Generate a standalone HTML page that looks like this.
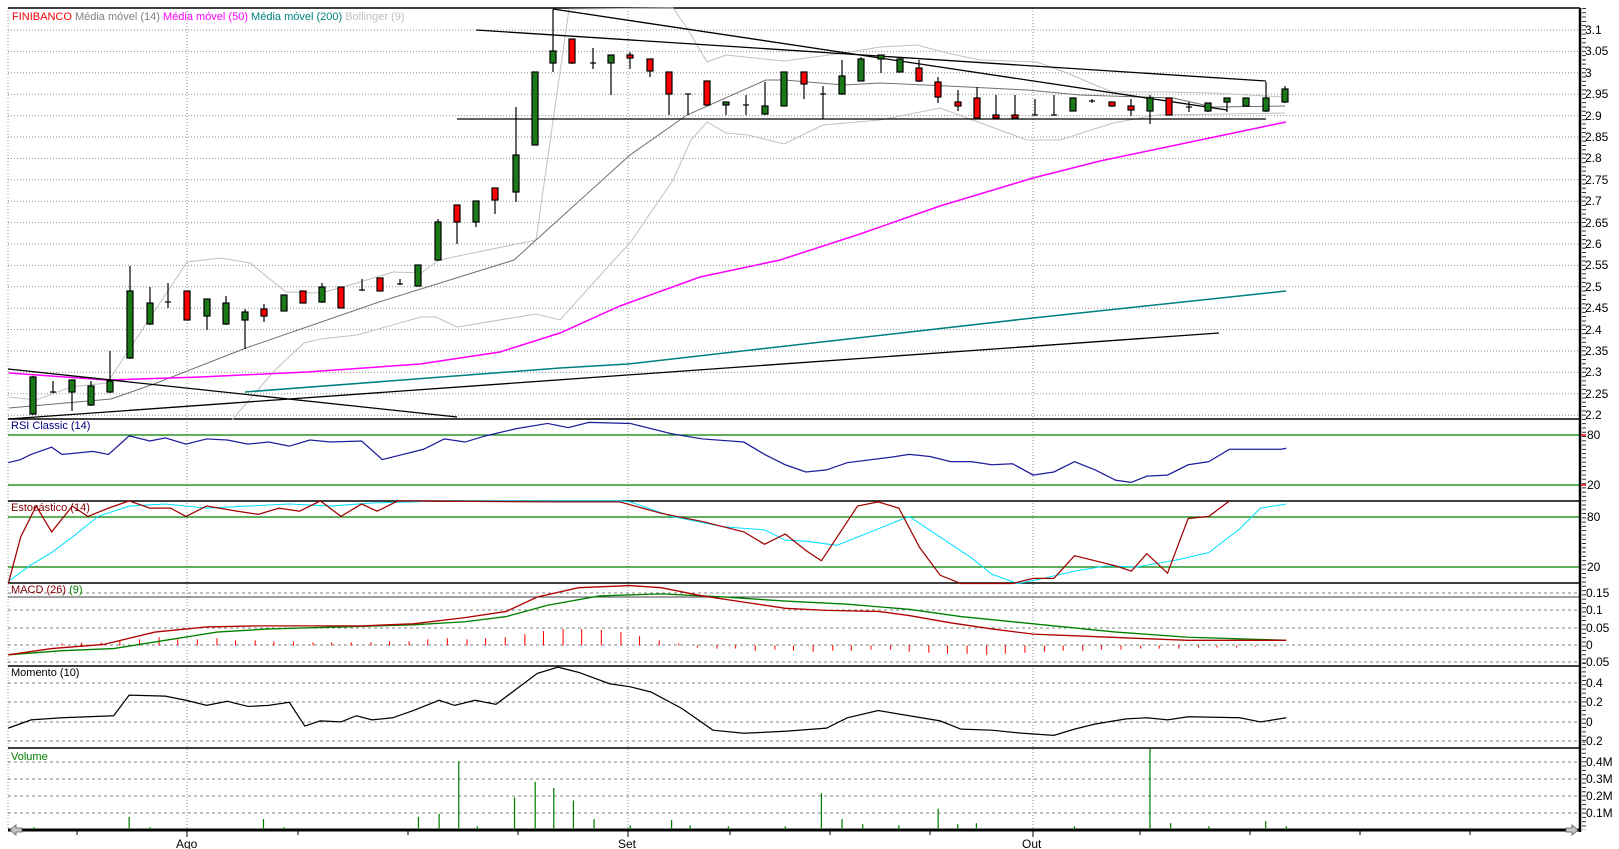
<!DOCTYPE html>
<html><head><meta charset="utf-8"><style>
html,body{margin:0;padding:0;background:#fff;width:1619px;height:849px;overflow:hidden}
svg{display:block;font-family:"Liberation Sans",Arial,sans-serif}
</style></head><body>
<svg width="1619" height="849" viewBox="0 0 1619 849" xmlns="http://www.w3.org/2000/svg">
<rect width="1619" height="849" fill="#fff"/>
<!-- price grid -->
<g stroke="#909090" stroke-width="1" stroke-dasharray="1,2">
<line x1="8" y1="30" x2="1580" y2="30"/><line x1="8" y1="51.4" x2="1580" y2="51.4"/><line x1="8" y1="72.8" x2="1580" y2="72.8"/><line x1="8" y1="94.2" x2="1580" y2="94.2"/><line x1="8" y1="115.6" x2="1580" y2="115.6"/><line x1="8" y1="137" x2="1580" y2="137"/><line x1="8" y1="158.4" x2="1580" y2="158.4"/><line x1="8" y1="179.8" x2="1580" y2="179.8"/><line x1="8" y1="201.2" x2="1580" y2="201.2"/><line x1="8" y1="222.6" x2="1580" y2="222.6"/><line x1="8" y1="244" x2="1580" y2="244"/><line x1="8" y1="265.4" x2="1580" y2="265.4"/><line x1="8" y1="286.8" x2="1580" y2="286.8"/><line x1="8" y1="308.2" x2="1580" y2="308.2"/><line x1="8" y1="329.6" x2="1580" y2="329.6"/><line x1="8" y1="351" x2="1580" y2="351"/><line x1="8" y1="372.4" x2="1580" y2="372.4"/><line x1="8" y1="393.8" x2="1580" y2="393.8"/><line x1="8" y1="415.2" x2="1580" y2="415.2"/>
<line x1="8" y1="8" x2="8" y2="830"/><line x1="187" y1="8" x2="187" y2="830"/><line x1="628" y1="8" x2="628" y2="830"/><line x1="1033" y1="8" x2="1033" y2="830"/>
</g>
<!-- lower dashed grids -->
<g stroke="#808080" stroke-width="1" stroke-dasharray="3,3">
<line x1="8" y1="593" x2="1580" y2="593"/><line x1="8" y1="610" x2="1580" y2="610"/><line x1="8" y1="628" x2="1580" y2="628"/><line x1="8" y1="645" x2="1580" y2="645"/><line x1="8" y1="662" x2="1580" y2="662"/>
<line x1="8" y1="683" x2="1580" y2="683"/><line x1="8" y1="702" x2="1580" y2="702"/><line x1="8" y1="722" x2="1580" y2="722"/><line x1="8" y1="741" x2="1580" y2="741"/>
<line x1="8" y1="762" x2="1580" y2="762"/><line x1="8" y1="779" x2="1580" y2="779"/><line x1="8" y1="796" x2="1580" y2="796"/><line x1="8" y1="813" x2="1580" y2="813"/>
</g>
<line x1="8" y1="597" x2="1580" y2="597" stroke="#404040" stroke-width="1"/>
<g stroke="#008000" stroke-width="1.2">
<line x1="8" y1="435" x2="1580" y2="435"/><line x1="8" y1="485" x2="1580" y2="485"/><line x1="8" y1="517" x2="1580" y2="517"/><line x1="8" y1="567" x2="1580" y2="567"/>
</g>
<!-- separators -->
<g stroke="#000" stroke-width="1.5">
<line x1="8" y1="8" x2="1580" y2="8"/><line x1="8" y1="419" x2="1580" y2="419"/><line x1="8" y1="501" x2="1580" y2="501"/><line x1="8" y1="583" x2="1580" y2="583"/><line x1="8" y1="666" x2="1580" y2="666"/><line x1="8" y1="748" x2="1580" y2="748"/>
</g>
<line x1="1580" y1="8" x2="1580" y2="832" stroke="#000" stroke-width="2.5"/>
<line x1="1584" y1="8" x2="1584" y2="830" stroke="#000" stroke-width="4" stroke-dasharray="1,3.28" opacity="0.8"/>
<line x1="8" y1="830" x2="1580" y2="830" stroke="#000" stroke-width="3"/>
<!-- bottom ticks -->
<g stroke="#000" stroke-width="1"><line x1="77" y1="830" x2="77" y2="835"/><line x1="187" y1="830" x2="187" y2="837"/><line x1="298" y1="830" x2="298" y2="835"/><line x1="408" y1="830" x2="408" y2="835"/><line x1="518" y1="830" x2="518" y2="835"/><line x1="628" y1="830" x2="628" y2="837"/><line x1="730" y1="830" x2="730" y2="835"/><line x1="830" y1="830" x2="830" y2="835"/><line x1="930" y1="830" x2="930" y2="835"/><line x1="1033" y1="830" x2="1033" y2="837"/><line x1="1140" y1="830" x2="1140" y2="835"/><line x1="1250" y1="830" x2="1250" y2="835"/><line x1="1360" y1="830" x2="1360" y2="835"/><line x1="1470" y1="830" x2="1470" y2="835"/></g>
<polygon points="10,830 16,825 16,828 22,828 22,832 16,832 16,835" fill="#c8c8c8" stroke="#555" stroke-width="0.8"/>
<polygon points="1578,830 1572,825 1572,828 1566,828 1566,832 1572,832 1572,835" fill="#c8c8c8" stroke="#555" stroke-width="0.8"/>

<!-- Bollinger / MA lines -->
<polyline fill="none" stroke="#c0c0c0" stroke-width="1" points="9,397 36,400 71,387 107,383 187,262 221,258 250,263 286,292 321,293 357,283 393,272 421,273 439,260 536,240 569,9 673,8 687,28 707,62 726,55 784,61 844,53 880,47 917,45 947,53 980,60 1037,62 1067,73 1100,87 1113,92 1163,92 1213,93 1285,97"/>
<polyline fill="none" stroke="#c0c0c0" stroke-width="1" points="232,420 275,370 304,343 321,339 357,335 421,317 436,317 457,327 536,314 560,320 614,260 630,243 673,180 691,140 707,122 726,133 748,135 784,144 823,125 880,120 940,108 1027,140 1060,140 1113,123 1157,115 1285,113"/>
<polyline fill="none" stroke="#707070" stroke-width="1" points="9,408 111,399 154,384 246,348 379,302 514,260 536,240 630,155 687,115 766,80 784,80 844,85 880,83 947,86 1027,90 1080,95 1173,98 1213,107 1285,106"/>
<polyline fill="none" stroke="#ff00ff" stroke-width="1.5" points="9,373 107,380 200,377 307,372 420,364 500,352 560,333 620,306 700,277 780,260 860,234 940,206 1033,178 1100,161 1200,140 1286,122"/>
<polyline fill="none" stroke="#008080" stroke-width="1.5" points="245,392 560,368 628,364 1033,318 1286,291"/>
<!-- trend lines -->
<g stroke="#000" stroke-width="1.3" fill="none">
<line x1="457" y1="119" x2="1266" y2="119"/>
<line x1="476" y1="30" x2="1266" y2="81"/>
<line x1="553" y1="9" x2="1227" y2="110"/>
<line x1="8" y1="419" x2="1219" y2="333"/>
<line x1="8" y1="369" x2="457" y2="417"/>
</g>
<!-- candles -->
<g stroke="#000" stroke-width="1.2">
<line x1="33" y1="376" x2="33" y2="415"/><rect x="30" y="377" width="6" height="37" fill="#1a7a1a"/>
<line x1="53" y1="381" x2="53" y2="393"/><line x1="50" y1="392" x2="56" y2="392"/>
<line x1="72" y1="380" x2="72" y2="411"/><rect x="69" y="380" width="6" height="12" fill="#1a7a1a"/>
<line x1="91" y1="381" x2="91" y2="406"/><rect x="88" y="386" width="6" height="19" fill="#1a7a1a"/>
<line x1="110" y1="351" x2="110" y2="393"/><rect x="107" y="381" width="6" height="11" fill="#1a7a1a"/>
<line x1="130" y1="266" x2="130" y2="359"/><rect x="127" y="291" width="6" height="67" fill="#1a7a1a"/>
<line x1="150" y1="287" x2="150" y2="325"/><rect x="147" y="303" width="6" height="21" fill="#1a7a1a"/>
<line x1="168" y1="283" x2="168" y2="308"/><line x1="165" y1="302" x2="171" y2="302"/>
<line x1="187" y1="291" x2="187" y2="320"/><rect x="184" y="291" width="6" height="29" fill="#ff0000"/>
<line x1="207" y1="299" x2="207" y2="330"/><rect x="204" y="299" width="6" height="17" fill="#1a7a1a"/>
<line x1="226" y1="296" x2="226" y2="325"/><rect x="223" y="303" width="6" height="21" fill="#1a7a1a"/>
<line x1="245" y1="309" x2="245" y2="349"/><rect x="242" y="312" width="6" height="8" fill="#1a7a1a"/>
<line x1="264" y1="304" x2="264" y2="322"/><rect x="261" y="309" width="6" height="7" fill="#ff0000"/>
<line x1="284" y1="295" x2="284" y2="311"/><rect x="281" y="295" width="6" height="16" fill="#1a7a1a"/>
<line x1="303" y1="291" x2="303" y2="303"/><rect x="300" y="291" width="6" height="12" fill="#ff0000"/>
<line x1="322" y1="283" x2="322" y2="303"/><rect x="319" y="287" width="6" height="15" fill="#1a7a1a"/>
<line x1="341" y1="287" x2="341" y2="308"/><rect x="338" y="287" width="6" height="21" fill="#ff0000"/>
<line x1="362" y1="279" x2="362" y2="291"/><line x1="359" y1="290" x2="365" y2="290"/>
<line x1="380" y1="278" x2="380" y2="291"/><rect x="377" y="278" width="6" height="13" fill="#ff0000"/>
<line x1="400" y1="279" x2="400" y2="285"/><line x1="397" y1="284" x2="403" y2="284"/>
<line x1="418" y1="265" x2="418" y2="286"/><rect x="415" y="265" width="6" height="21" fill="#1a7a1a"/>
<line x1="438" y1="219" x2="438" y2="261"/><rect x="435" y="222" width="6" height="38" fill="#1a7a1a"/>
<line x1="457" y1="205" x2="457" y2="244"/><rect x="454" y="205" width="6" height="17" fill="#ff0000"/>
<line x1="476" y1="201" x2="476" y2="227"/><rect x="473" y="201" width="6" height="21" fill="#1a7a1a"/>
<line x1="495" y1="188" x2="495" y2="214"/><rect x="492" y="188" width="6" height="12" fill="#ff0000"/>
<line x1="516" y1="107" x2="516" y2="202"/><rect x="513" y="155" width="6" height="37" fill="#1a7a1a"/>
<line x1="535" y1="72" x2="535" y2="145"/><rect x="532" y="72" width="6" height="73" fill="#1a7a1a"/>
<line x1="553" y1="9" x2="553" y2="72"/><rect x="550" y="51" width="6" height="12" fill="#1a7a1a"/>
<line x1="572" y1="39" x2="572" y2="64"/><rect x="569" y="39" width="6" height="24" fill="#ff0000"/>
<line x1="593" y1="48" x2="593" y2="69"/><line x1="590" y1="63" x2="596" y2="63"/>
<line x1="611" y1="55" x2="611" y2="95"/><rect x="608" y="55" width="6" height="8" fill="#1a7a1a"/>
<line x1="630" y1="52" x2="630" y2="69"/><rect x="627" y="55" width="6" height="3" fill="#ff0000"/>
<line x1="650" y1="59" x2="650" y2="77"/><rect x="647" y="59" width="6" height="12" fill="#ff0000"/>
<line x1="669" y1="72" x2="669" y2="115"/><rect x="666" y="72" width="6" height="22" fill="#ff0000"/>
<line x1="688" y1="94" x2="688" y2="115"/><line x1="685" y1="94" x2="691" y2="94"/>
<line x1="707" y1="81" x2="707" y2="106"/><rect x="704" y="81" width="6" height="24" fill="#ff0000"/>
<line x1="726" y1="102" x2="726" y2="115"/><rect x="723" y="102" width="6" height="3" fill="#1a7a1a"/>
<line x1="746" y1="95" x2="746" y2="115"/><line x1="743" y1="105" x2="749" y2="105"/>
<line x1="765" y1="82" x2="765" y2="115"/><rect x="762" y="106" width="6" height="8" fill="#1a7a1a"/>
<line x1="784" y1="72" x2="784" y2="106"/><rect x="781" y="72" width="6" height="34" fill="#1a7a1a"/>
<line x1="804" y1="72" x2="804" y2="99"/><rect x="801" y="72" width="6" height="12" fill="#ff0000"/>
<line x1="823" y1="86" x2="823" y2="119"/><line x1="820" y1="94" x2="826" y2="94"/>
<line x1="842" y1="60" x2="842" y2="95"/><rect x="839" y="76" width="6" height="18" fill="#1a7a1a"/>
<line x1="861" y1="57" x2="861" y2="81"/><rect x="858" y="59" width="6" height="22" fill="#1a7a1a"/>
<line x1="881" y1="55" x2="881" y2="73"/><rect x="878" y="55" width="6" height="4" fill="#1a7a1a"/>
<line x1="900" y1="57" x2="900" y2="72"/><rect x="897" y="59" width="6" height="13" fill="#1a7a1a"/>
<line x1="919" y1="60" x2="919" y2="82"/><rect x="916" y="68" width="6" height="13" fill="#ff0000"/>
<line x1="938" y1="77" x2="938" y2="103"/><rect x="935" y="82" width="6" height="15" fill="#ff0000"/>
<line x1="958" y1="90" x2="958" y2="111"/><rect x="955" y="102" width="6" height="4" fill="#ff0000"/>
<line x1="977" y1="87" x2="977" y2="119"/><rect x="974" y="98" width="6" height="20" fill="#ff0000"/>
<line x1="996" y1="95" x2="996" y2="119"/><rect x="993" y="115" width="6" height="3" fill="#ff0000"/>
<line x1="1015" y1="95" x2="1015" y2="119"/><rect x="1012" y="115" width="6" height="3" fill="#ff0000"/>
<line x1="1035" y1="99" x2="1035" y2="115"/><line x1="1032" y1="115" x2="1038" y2="115"/>
<line x1="1054" y1="95" x2="1054" y2="115"/><line x1="1051" y1="115" x2="1057" y2="115"/>
<line x1="1073" y1="98" x2="1073" y2="111"/><rect x="1070" y="98" width="6" height="13" fill="#1a7a1a"/>
<line x1="1092" y1="99" x2="1092" y2="103"/><line x1="1089" y1="101" x2="1095" y2="101"/>
<line x1="1112" y1="102" x2="1112" y2="107"/><rect x="1109" y="102" width="6" height="4" fill="#ff0000"/>
<line x1="1131" y1="99" x2="1131" y2="116"/><rect x="1128" y="106" width="6" height="4" fill="#ff0000"/>
<line x1="1150" y1="95" x2="1150" y2="124"/><rect x="1147" y="98" width="6" height="13" fill="#1a7a1a"/>
<line x1="1169" y1="98" x2="1169" y2="115"/><rect x="1166" y="98" width="6" height="17" fill="#ff0000"/>
<line x1="1189" y1="102" x2="1189" y2="112"/><line x1="1186" y1="107" x2="1192" y2="107"/>
<line x1="1208" y1="103" x2="1208" y2="112"/><rect x="1205" y="103" width="6" height="8" fill="#1a7a1a"/>
<line x1="1227" y1="98" x2="1227" y2="112"/><rect x="1224" y="98" width="6" height="4" fill="#1a7a1a"/>
<line x1="1246" y1="98" x2="1246" y2="106"/><rect x="1243" y="98" width="6" height="8" fill="#1a7a1a"/>
<line x1="1266" y1="82" x2="1266" y2="112"/><rect x="1263" y="98" width="6" height="13" fill="#1a7a1a"/>
<line x1="1285" y1="86" x2="1285" y2="103"/><rect x="1282" y="89" width="6" height="13" fill="#1a7a1a"/>
</g>

<!-- lower indicators in view coords -->
<g transform="scale(1.0332,1.0328)" fill="none">
<polyline stroke="#1c1c9c" stroke-width="1.2" points="8,448 20,445 30,440 50,433 60,440 90,437 105,440 125,422 145,427 160,424 180,430 200,425 220,426 240,430 260,428 280,432 300,426 320,428 350,427 370,445 390,440 410,435 430,425 450,428 470,422 500,415 530,410 550,414 570,409 610,410 650,420 680,425 720,428 740,440 760,450 780,457 800,455 820,448 860,443 880,440 900,442 920,447 940,447 960,450 980,449 1000,460 1020,457 1040,447 1060,455 1080,465 1095,467 1110,461 1130,460 1150,450 1170,447 1190,435 1240,435 1245,434"/>
<polyline stroke="#00e0ff" stroke-width="1" points="8,563 30,547 50,535 70,520 95,500 125,490 160,488 200,492 240,490 280,488 320,490 360,487 400,486 420,485 600,485 610,486 650,500 700,510 740,513 760,523 780,524 810,528 850,512 880,500 910,520 940,540 960,556 985,565 1010,560 1040,553 1070,548 1100,549 1140,542 1170,535 1200,512 1220,492 1245,488"/>
<polyline stroke="#a00000" stroke-width="1.2" points="8,565 20,520 35,490 50,515 70,490 85,500 105,492 125,485 145,492 165,492 180,500 200,490 230,495 250,498 270,492 290,495 310,485 330,500 350,488 365,495 385,485 540,486 600,486 640,497 680,505 720,515 740,527 760,517 780,533 795,543 830,490 850,486 870,492 890,530 910,557 930,565 980,565 1000,560 1020,560 1040,538 1060,543 1080,548 1095,553 1110,536 1130,555 1150,502 1170,500 1190,485"/>
<g stroke="#ff0000" stroke-width="1">
<line x1="60" y1="625" x2="60" y2="623"/><line x1="79" y1="625" x2="79" y2="622"/><line x1="98" y1="625" x2="98" y2="622"/><line x1="116" y1="625" x2="116" y2="620"/><line x1="135" y1="625" x2="135" y2="619"/><line x1="154" y1="625" x2="154" y2="617"/><line x1="172" y1="625" x2="172" y2="619"/><line x1="191" y1="625" x2="191" y2="619"/><line x1="210" y1="625" x2="210" y2="618"/><line x1="228" y1="625" x2="228" y2="620"/><line x1="247" y1="625" x2="247" y2="620"/><line x1="265" y1="625" x2="265" y2="621"/><line x1="284" y1="625" x2="284" y2="621"/><line x1="303" y1="625" x2="303" y2="622"/><line x1="321" y1="625" x2="321" y2="622"/><line x1="340" y1="625" x2="340" y2="622"/><line x1="359" y1="625" x2="359" y2="622"/><line x1="377" y1="625" x2="377" y2="621"/><line x1="396" y1="625" x2="396" y2="621"/><line x1="414" y1="625" x2="414" y2="619"/><line x1="433" y1="625" x2="433" y2="618"/><line x1="452" y1="625" x2="452" y2="619"/><line x1="470" y1="625" x2="470" y2="618"/><line x1="489" y1="625" x2="489" y2="617"/><line x1="508" y1="625" x2="508" y2="614"/><line x1="526" y1="625" x2="526" y2="611"/><line x1="545" y1="625" x2="545" y2="609"/><line x1="563" y1="625" x2="563" y2="609"/><line x1="582" y1="625" x2="582" y2="610"/><line x1="601" y1="625" x2="601" y2="612"/><line x1="619" y1="625" x2="619" y2="616"/><line x1="638" y1="625" x2="638" y2="620"/><line x1="657" y1="625" x2="657" y2="623"/><line x1="675" y1="625" x2="675" y2="627"/><line x1="694" y1="625" x2="694" y2="628"/><line x1="712" y1="625" x2="712" y2="628"/><line x1="731" y1="625" x2="731" y2="630"/><line x1="750" y1="625" x2="750" y2="629"/><line x1="768" y1="625" x2="768" y2="630"/><line x1="787" y1="625" x2="787" y2="631"/><line x1="806" y1="625" x2="806" y2="630"/><line x1="824" y1="625" x2="824" y2="630"/><line x1="843" y1="625" x2="843" y2="629"/><line x1="862" y1="625" x2="862" y2="629"/><line x1="880" y1="625" x2="880" y2="631"/><line x1="899" y1="625" x2="899" y2="632"/><line x1="917" y1="625" x2="917" y2="633"/><line x1="936" y1="625" x2="936" y2="633"/><line x1="955" y1="625" x2="955" y2="634"/><line x1="973" y1="625" x2="973" y2="633"/><line x1="992" y1="625" x2="992" y2="632"/><line x1="1011" y1="625" x2="1011" y2="631"/><line x1="1029" y1="625" x2="1029" y2="630"/><line x1="1048" y1="625" x2="1048" y2="630"/><line x1="1066" y1="625" x2="1066" y2="629"/><line x1="1085" y1="625" x2="1085" y2="629"/><line x1="1104" y1="625" x2="1104" y2="628"/><line x1="1122" y1="625" x2="1122" y2="628"/><line x1="1141" y1="625" x2="1141" y2="628"/><line x1="1160" y1="625" x2="1160" y2="627"/><line x1="1178" y1="625" x2="1178" y2="627"/><line x1="1197" y1="625" x2="1197" y2="627"/><line x1="1215" y1="625" x2="1215" y2="626"/><line x1="1234" y1="625" x2="1234" y2="626"/>
</g>
<polyline stroke="#008000" stroke-width="1.3" points="8,634 60,630 110,628 160,620 210,612 260,609 330,607 400,605 450,602 490,597 530,586 580,577 640,575 700,578 760,582 820,585 880,590 930,597 1000,604 1080,612 1150,617 1245,620"/>
<polyline stroke="#b00000" stroke-width="1.3" points="8,634 50,628 100,624 150,612 200,607 250,606 300,606 350,606 400,604 450,598 490,592 520,578 560,569 610,567 640,569 680,577 720,583 760,589 800,591 850,592 880,596 920,603 960,609 1000,614 1050,616 1100,618 1150,620 1245,620"/>
<polyline stroke="#000" stroke-width="1.2" points="8,705 30,697 60,695 110,693 125,673 160,674 180,678 200,683 220,679 240,684 260,683 280,680 295,703 310,698 330,699 345,693 360,697 380,695 400,688 425,678 440,683 460,678 480,682 500,667 520,652 540,646 560,651 590,662 610,665 630,670 660,686 690,707 720,710 760,708 800,705 820,695 850,688 880,693 910,698 930,706 960,707 990,710 1020,712 1040,706 1060,701 1090,696 1110,695 1130,697 1150,694 1200,695 1220,699 1245,695"/>
<g stroke="#008000" stroke-width="1.2">
<line x1="33" y1="803" x2="33" y2="801"/><line x1="125" y1="803" x2="125" y2="791"/><line x1="145" y1="803" x2="145" y2="801"/><line x1="255" y1="803" x2="255" y2="793"/><line x1="275" y1="803" x2="275" y2="801"/><line x1="405" y1="803" x2="405" y2="791"/><line x1="425" y1="803" x2="425" y2="788"/><line x1="444" y1="803" x2="444" y2="737"/><line x1="462" y1="803" x2="462" y2="800"/><line x1="498" y1="803" x2="498" y2="772"/><line x1="518" y1="803" x2="518" y2="757"/><line x1="536" y1="803" x2="536" y2="763"/><line x1="555" y1="803" x2="555" y2="775"/><line x1="575" y1="803" x2="575" y2="793"/><line x1="610" y1="803" x2="610" y2="799"/><line x1="650" y1="803" x2="650" y2="794"/><line x1="668" y1="803" x2="668" y2="799"/><line x1="705" y1="803" x2="705" y2="800"/><line x1="760" y1="803" x2="760" y2="800"/><line x1="795" y1="803" x2="795" y2="768"/><line x1="815" y1="803" x2="815" y2="793"/><line x1="835" y1="803" x2="835" y2="798"/><line x1="870" y1="803" x2="870" y2="799"/><line x1="908" y1="803" x2="908" y2="783"/><line x1="927" y1="803" x2="927" y2="798"/><line x1="945" y1="803" x2="945" y2="797"/><line x1="1040" y1="803" x2="1040" y2="800"/><line x1="1113" y1="803" x2="1113" y2="725"/><line x1="1133" y1="803" x2="1133" y2="797"/><line x1="1170" y1="803" x2="1170" y2="800"/><line x1="1225" y1="803" x2="1225" y2="795"/><line x1="1245" y1="803" x2="1245" y2="800"/>
</g>
</g>

<!-- labels -->
<g font-size="11">
<text x="12" y="20"><tspan fill="#ff0000">FINIBANCO</tspan><tspan fill="#808080"> Média móvel (14)</tspan><tspan fill="#ff00ff"> Média móvel (50)</tspan><tspan fill="#008080"> Média móvel (200)</tspan><tspan fill="#c0c0c0"> Bollinger (9)</tspan></text>
<text x="11" y="429" fill="#000080">RSI Classic (14)</text>
<text x="11" y="511" fill="#800000">Estocástico (14)</text>
<text x="11" y="593"><tspan fill="#800000">MACD (26)</tspan><tspan fill="#008000">  (9)</tspan></text>
<text x="11" y="676" fill="#000">Momento (10)</text>
<text x="11" y="760" fill="#008000">Volume</text>
</g>
<g font-size="12" fill="#000">
<text x="1585" y="34">3.1</text><text x="1585" y="55">3.05</text><text x="1585" y="77">3</text><text x="1585" y="98">2.95</text><text x="1585" y="120">2.9</text><text x="1585" y="141">2.85</text><text x="1585" y="162">2.8</text><text x="1585" y="184">2.75</text><text x="1585" y="205">2.7</text><text x="1585" y="227">2.65</text><text x="1585" y="248">2.6</text><text x="1585" y="269">2.55</text><text x="1585" y="291">2.5</text><text x="1585" y="312">2.45</text><text x="1585" y="334">2.4</text><text x="1585" y="355">2.35</text><text x="1585" y="376">2.3</text><text x="1585" y="398">2.25</text><text x="1585" y="419">2.2</text>
<text x="1587" y="439">80</text><text x="1587" y="489">20</text><text x="1587" y="521">80</text><text x="1587" y="571">20</text>
<text x="1586" y="597">0.15</text><text x="1586" y="614">0.1</text><text x="1586" y="632">0.05</text><text x="1586" y="649">0</text><text x="1582" y="666">-0.05</text>
<text x="1586" y="687">0.4</text><text x="1586" y="706">0.2</text><text x="1586" y="726">0</text><text x="1582" y="745">-0.2</text>
<text x="1586" y="766">0.4M</text><text x="1586" y="783">0.3M</text><text x="1586" y="800">0.2M</text><text x="1586" y="817">0.1M</text>
<text x="176" y="848">Ago</text><text x="618" y="848">Set</text><text x="1022" y="848">Out</text>
</g>
<g stroke="#ff0000" stroke-width="1.5"><line x1="1581" y1="435" x2="1586" y2="435"/><line x1="1581" y1="485" x2="1586" y2="485"/></g>
</svg>
</body></html>
